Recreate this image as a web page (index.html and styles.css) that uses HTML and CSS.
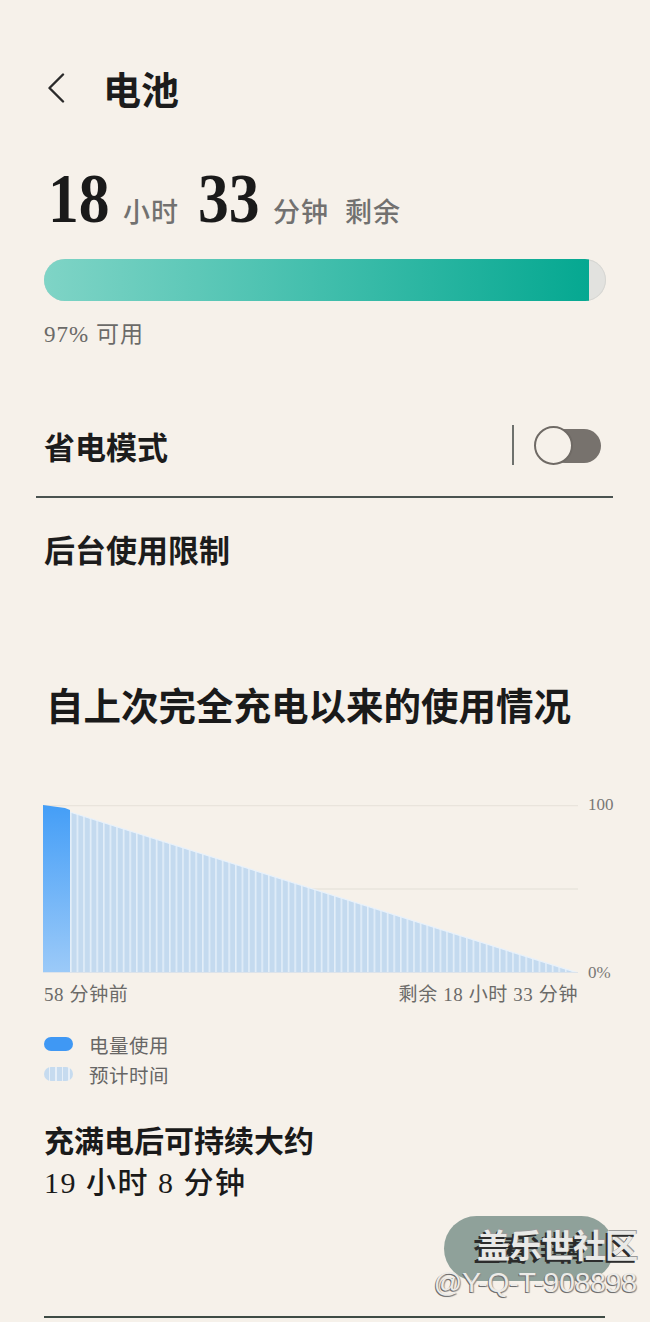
FILE: index.html
```html
<!DOCTYPE html>
<html lang="zh-CN">
<head>
<meta charset="utf-8">
<title>电池</title>
<link rel="stylesheet" href="styles.css">
</head>
<body>
<div class="page">
  <header class="header">
    <svg class="back" width="18" height="30" viewBox="0 0 18 30"><polyline points="16,1.5 2.5,15 16,28.5" fill="none" stroke="#2a2a2a" stroke-width="2.4" stroke-linecap="round" stroke-linejoin="round"/></svg>
    <h1 class="title">电池</h1>
  </header>

  <div class="remaining">
    <span class="big">18</span>
    <span class="unit u1">小时</span>
    <span class="big b2">33</span>
    <span class="unit u1">分钟</span>
    <span class="unit u2">剩余</span>
  </div>

  <div class="bar"><div class="bar-fill" style="width:97%"></div></div>
  <div class="avail">97% 可用</div>

  <div class="row">
    <span class="row-label">省电模式</span>
    <div class="row-right">
      <span class="sep"></span>
      <span class="toggle"><span class="knob"></span></span>
    </div>
  </div>
  <div class="divider"></div>
  <div class="row"><span class="row-label">后台使用限制</span></div>

  <h2 class="section-title">自上次完全充电以来的使用情况</h2>

  <div class="chart">
    <svg class="chart-svg" width="535" height="168" viewBox="0 0 535 168">
      <defs>
        <linearGradient id="used" x1="0" y1="0" x2="0" y2="1">
          <stop offset="0" stop-color="#449ef7"/>
          <stop offset="1" stop-color="#9ccaf8"/>
        </linearGradient>
        <pattern id="stripes" width="6.6" height="10" patternUnits="userSpaceOnUse" x="27">
          <rect width="6.6" height="10" fill="#c4daef"/>
          <rect x="0" width="1.6" height="10" fill="#e3eef9"/>
        </pattern>
      </defs>
      <line x1="0" y1="0.5" x2="535" y2="0.5" stroke="#e9e4dc" stroke-width="1.5"/>
      <line x1="0" y1="84" x2="535" y2="84" stroke="#e9e4dc" stroke-width="1.5"/>
      <path d="M27,7 L535,168 L27,168 Z" fill="url(#stripes)"/>
      <path d="M27,7 L535,168" stroke="#e8f1fa" stroke-width="1.2" fill="none"/>
      <path d="M0,0 L22,3 L27,5 L27,168 L0,168 Z" fill="url(#used)"/>
      <line x1="0" y1="167.5" x2="535" y2="167.5" stroke="#dde3ea" stroke-width="1"/>
    </svg>
    <div class="axis">
      <span>100</span>
      <span>0%</span>
    </div>
  </div>
  <div class="xlabels">
    <span>58 分钟前</span>
    <span>剩余 18 小时 33 分钟</span>
  </div>

  <ul class="legend">
    <li><span class="swatch used"></span>电量使用</li>
    <li><span class="swatch est"></span>预计时间</li>
  </ul>

  <div class="summary">
    <div class="summary-title">充满电后可持续大约</div>
    <div class="summary-value">19 小时 8 分钟</div>
  </div>

  <div class="actions">
    <button class="details">查看详情</button>
    <div class="watermark">
      <span class="wm-cn">盖乐世社区</span>
      <span class="wm-id">@Y-Q-T-908898</span>
    </div>
  </div>
  <div class="bottom-line"></div>
</div>
</body>
</html>
```

FILE: styles.css
```css
html, body {
  margin: 0;
  padding: 0;
  background: #f6f1ea;
}
body {
  width: 650px;
  height: 1322px;
  overflow: hidden;
  font-family: "Noto Sans CJK SC", "Noto Sans", sans-serif;
  color: #1e1e1e;
}
.page {
  padding: 62px 44px 0;
}
.header {
  height: 52px;
  display: flex;
  align-items: center;
}
.back {
  margin-left: 3px;
  flex: none;
}
.title {
  margin: 0 0 0 38px;
  font-size: 38px;
  font-weight: 700;
  line-height: 52px;
  color: #1c1c1c;
}
.remaining {
  margin-top: 50px;
  height: 70px;
  display: flex;
  align-items: baseline;
  line-height: 70px;
}
.big {
  flex: none;
  display: inline-block;
  width: 61px;
  white-space: nowrap;
  font-family: "Liberation Serif", serif;
  font-weight: 700;
  font-size: 70px;
  color: #1a1a1a;
  transform: scaleX(0.88);
  transform-origin: left center;
  margin-left: 4px;
}
.b2 {
  margin-left: 19px;
}
.unit {
  font-size: 27px;
  color: #727170;
  font-weight: 500;
  letter-spacing: 1px;
}
.u1 {
  margin-left: 14px;
}
.u2 {
  margin-left: 16px;
}
.bar {
  margin-top: 25px;
  height: 42px;
  border-radius: 21px;
  background: #e2e2df;
  box-shadow: inset 0 0 0 1px #d6d6d2;
  overflow: hidden;
}
.bar-fill {
  height: 100%;
  background: linear-gradient(90deg, #7fd4c6 0%, #4fc3b2 40%, #05a891 100%);
}
.avail {
  margin-top: 20px;
  line-height: 28px;
  font-size: 23px;
  letter-spacing: 1px;
  color: #6b6a68;
  font-family: "Liberation Serif", "Noto Sans CJK SC", serif;
}
.row {
  height: 80px;
  display: flex;
  align-items: center;
  justify-content: space-between;
}
.avail + .row {
  margin-top: 56px;
}
.row-label {
  font-size: 31px;
  font-weight: 700;
  color: #1c1c1c;
}
.row-right {
  display: flex;
  align-items: center;
  margin-right: 5px;
}
.sep {
  width: 2px;
  height: 40px;
  background: #6e716d;
  margin-right: 20px;
}
.toggle {
  position: relative;
  width: 67px;
  height: 39px;
  display: block;
}
.toggle::before {
  content: "";
  position: absolute;
  left: 14px;
  right: 0;
  top: 3px;
  bottom: 2px;
  border-radius: 17px;
  background: #77726d;
}
.knob {
  position: absolute;
  left: 0;
  top: 0;
  width: 35px;
  height: 35px;
  border-radius: 50%;
  border: 2px solid #6f6a65;
  background: #f6f1ea;
}
.divider {
  margin: 11px -7px 10px -8px;
  height: 2px;
  background: #4a5350;
}
.section-title {
  margin: 91px 0 0 2px;
  font-size: 37.5px;
  font-weight: 700;
  line-height: 50px;
  color: #1a1a1a;
}
.chart {
  margin-top: 76px;
  display: flex;
}
.chart-svg {
  display: block;
  margin-left: -1px;
  flex: none;
}
.axis {
  margin: -10px 0 -10px 10px;
  height: 188px;
  display: flex;
  flex-direction: column;
  justify-content: space-between;
  font-family: "Liberation Serif", serif;
  font-size: 17px;
  line-height: 20px;
  color: #7a7876;
}
.xlabels {
  margin-top: 11px;
  width: 534px;
  display: flex;
  justify-content: space-between;
  font-family: "Liberation Serif", "Noto Sans CJK SC", serif;
  font-size: 19px;
  letter-spacing: 0.6px;
  line-height: 22px;
  color: #6b6a68;
}
.legend {
  list-style: none;
  margin: 23px 0 0;
  padding: 0;
}
.legend li {
  height: 30px;
  display: flex;
  align-items: center;
  font-size: 19.5px;
  letter-spacing: 0.5px;
  color: #676665;
}
.swatch {
  width: 29px;
  height: 14px;
  border-radius: 7px;
  margin-right: 16px;
  flex: none;
}
.swatch.used {
  background: #3f98f4;
}
.swatch.est {
  background: repeating-linear-gradient(90deg, #c6dbef 0 5px, #e6eff8 5px 6.5px);
}
.summary {
  margin-top: 29px;
  line-height: 43px;
  font-size: 30px;
  color: #1a1a1a;
}
.summary-title {
  font-weight: 700;
}
.summary-value {
  font-family: "Liberation Serif", "Noto Sans CJK SC", serif;
  font-weight: 500;
  letter-spacing: 1.5px;
}
.actions {
  position: relative;
  margin: 12px -8px 0 0;
  display: flex;
  justify-content: flex-end;
}
.details {
  width: 170px;
  height: 65px;
  border: none;
  border-radius: 33px;
  background: #8fa19a;
  font-family: "Noto Sans CJK SC", sans-serif;
  font-size: 28px;
  font-weight: 700;
  color: #2a2a2a;
  padding: 0;
}
.watermark {
  position: absolute;
  right: -23px;
  top: 7px;
  display: flex;
  flex-direction: column;
  align-items: flex-end;
  pointer-events: none;
}
.wm-cn {
  font-size: 33px;
  font-weight: 700;
  line-height: 42px;
  color: #e9e9e7;
  text-shadow: -2px 2px 0 #2d2d2d, 1px -1px 0 #9a9a9a;
  letter-spacing: -1px;
}
.wm-id {
  margin-top: 4px;
  font-family: "Liberation Sans", sans-serif;
  font-size: 28px;
  line-height: 28px;
  color: #ecebe8;
  text-shadow: -1px 1px 0 #6f6f6f, 1px 1px 1px #8a8a8a;
}
.bottom-line {
  margin: 35px 1px 0 0;
  height: 2px;
  background: #3e4b45;
}
```
